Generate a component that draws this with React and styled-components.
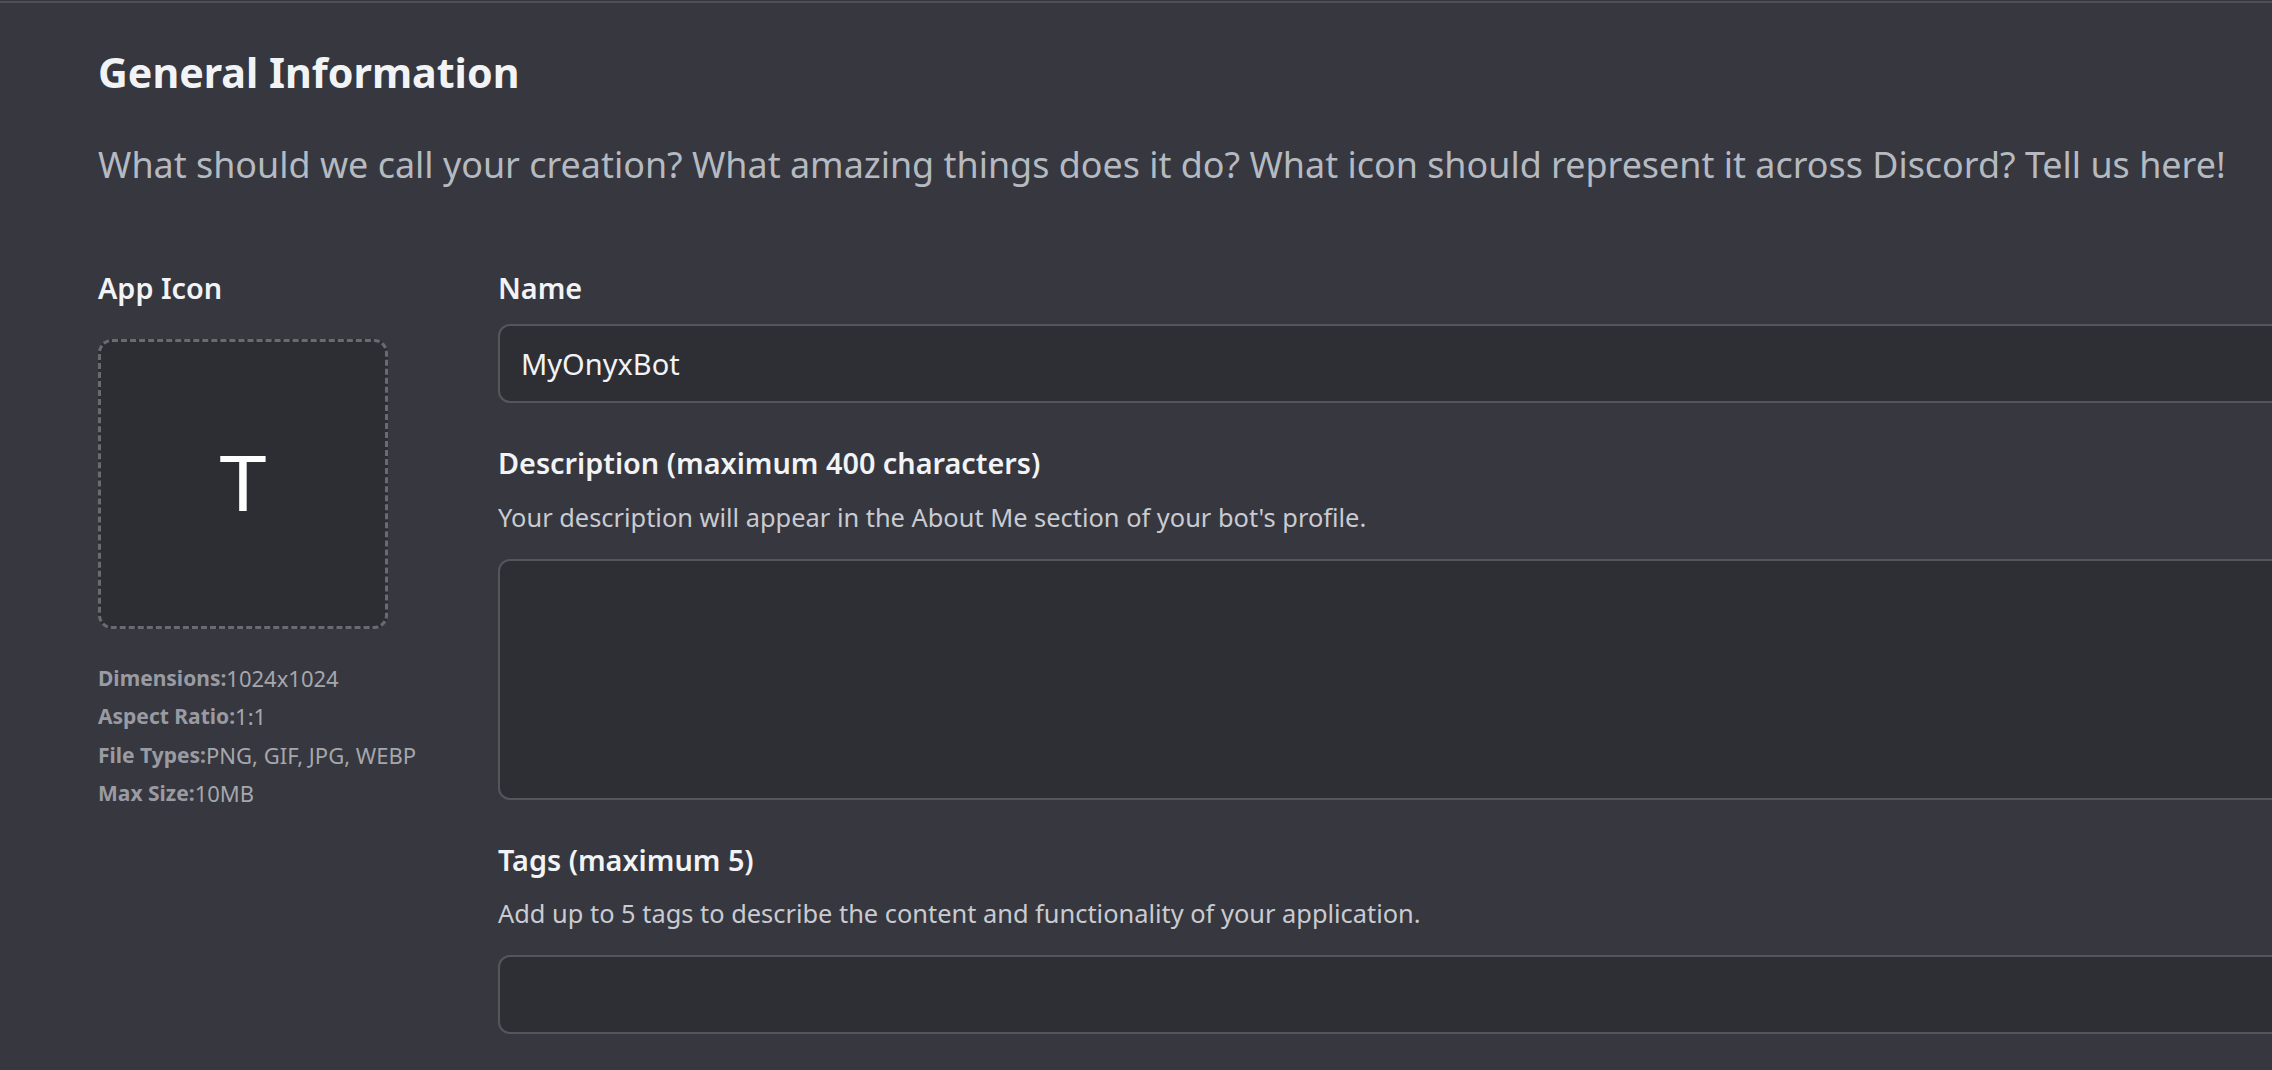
import React from 'react'
import styled, { createGlobalStyle } from 'styled-components'

const GlobalStyle = createGlobalStyle`
  html, body {
    margin: 0;
    padding: 0;
    background: #36373f;
    overflow: hidden;
  }
  body {
    font-family: 'Noto Sans', 'Open Sans', sans-serif;
  }
`

const Page = styled.div({
  boxSizing: 'border-box',
  width: '2272px',
  height: '1070px',
  paddingTop: '1px',
  background: '#36373f',
})

const Divider = styled.div({
  height: '2px',
  background: '#4f5057',
})

const Content = styled.div({
  paddingLeft: '98px',
})

const Title = styled.h1({
  margin: '41px 0 0 0',
  fontSize: '41.2px',
  lineHeight: '56px',
  fontWeight: 700,
  color: '#f2f3f5',
})

const Subtitle = styled.p({
  margin: '43px 0 0 0',
  fontSize: '35.9px',
  lineHeight: '44px',
  color: '#b5bac1',
  whiteSpace: 'nowrap',
})

const Columns = styled.div({
  display: 'flex',
  marginTop: '81px',
})

const IconColumn = styled.div({
  display: 'flex',
  flexDirection: 'column',
  width: '400px',
  flexShrink: 0,
})

const FormColumn = styled.div({
  display: 'flex',
  flexDirection: 'column',
  width: '2000px',
  flexShrink: 0,
})

const Label = styled.div(({ mb }) => ({
  fontSize: '28.8px',
  lineHeight: '40px',
  fontWeight: 600,
  color: '#f2f3f5',
  marginBottom: mb || '16px',
}))

const Help = styled.div({
  fontSize: '25.4px',
  lineHeight: '36px',
  color: '#c9cbd1',
  marginBottom: '24px',
})

const Field = styled.div({
  display: 'flex',
  flexDirection: 'column',
  marginBottom: '40px',
})

const Input = styled.div(({ height }) => ({
  boxSizing: 'border-box',
  height: height || '79px',
  border: '2px solid #55565d',
  borderRadius: '12px',
  background: '#2e2f34',
  display: 'flex',
  alignItems: height ? 'flex-start' : 'center',
  padding: '0 21px',
  fontSize: '29px',
  color: '#f2f3f5',
}))

const IconBox = styled.div({
  boxSizing: 'border-box',
  width: '290px',
  height: '290px',
  border: '3px dashed #6a6b72',
  borderRadius: '14px',
  background: '#2d2e33',
  display: 'flex',
  alignItems: 'center',
  justifyContent: 'center',
  fontFamily: "'Liberation Sans', Arial, sans-serif",
  fontSize: '80px',
  fontWeight: 300,
  color: '#ffffff',
  marginBottom: '30px',
})

const Specs = styled.div({
  display: 'flex',
  flexDirection: 'column',
})

const SpecRow = styled.div({
  height: '38.3px',
  display: 'flex',
  alignItems: 'center',
  fontSize: '21px',
  color: '#a6a7ad',
  whiteSpace: 'nowrap',
})

const SpecKey = styled.span({
  fontWeight: 700,
  color: '#9a9ba2',
})

const SpecValue = styled.span({
  fontSize: '22px',
})

const specs = [
  ['Dimensions:', '1024x1024'],
  ['Aspect Ratio:', '1:1'],
  ['File Types:', 'PNG, GIF, JPG, WEBP'],
  ['Max Size:', '10MB'],
]

export default function App() {
  return (
    <Page>
      <GlobalStyle />
      <Divider />
      <Content>
        <Title>General Information</Title>
        <Subtitle>
          What should we call your creation? What amazing things does it do? What icon should represent it across Discord? Tell us here!
        </Subtitle>
        <Columns>
          <IconColumn>
            <Label mb={'31px'}>App Icon</Label>
            <IconBox>T</IconBox>
            <Specs>
              {specs.map(([key, value]) => (
                <SpecRow key={key}>
                  <SpecKey>{key}</SpecKey>
                  <SpecValue>{value}</SpecValue>
                </SpecRow>
              ))}
            </Specs>
          </IconColumn>
          <FormColumn>
            <Field>
              <Label>Name</Label>
              <Input>MyOnyxBot</Input>
            </Field>
            <Field>
              <Label>Description (maximum 400 characters)</Label>
              <Help>Your description will appear in the About Me section of your bot's profile.</Help>
              <Input height={'241px'} />
            </Field>
            <Field>
              <Label mb={'15px'}>Tags (maximum 5)</Label>
              <Help>Add up to 5 tags to describe the content and functionality of your application.</Help>
              <Input />
            </Field>
          </FormColumn>
        </Columns>
      </Content>
    </Page>
  )
}
